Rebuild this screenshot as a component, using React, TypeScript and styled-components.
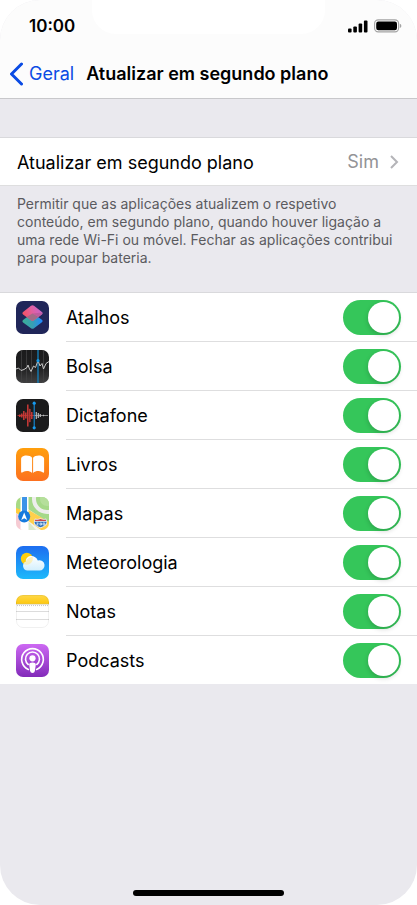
import React, { useState } from "react";
import type { ReactElement } from "react";
import styled, { createGlobalStyle } from "styled-components";

const GlobalStyle = createGlobalStyle`
  *, *::before, *::after { box-sizing: border-box; }
  body {
    margin: 0;
    background: #ffffff;
    color: #000000;
    font-family: Inter, "Liberation Sans", sans-serif;
  }
  button, input { font: inherit; }
`;

const Screen = styled.div`
  display: flex;
  flex-direction: column;
  min-height: 100vh;
  overflow: hidden;
  border-radius: 40px;
  background: #eae9ee;
`;

const Header = styled.header`
  border-bottom: 1px solid #c8c8cb;
  background: #fcfcfc;
`;

const StatusBar = styled.div`
  display: grid;
  grid-template-columns: 92px 1fr 92px;
  height: 50px;
`;

const Clock = styled.time`
  align-self: center;
  padding: 2px 0 0 29px;
  font-size: 17px;
  line-height: 20px;
  font-weight: 600;
  white-space: nowrap;
`;

const Notch = styled.div`
  height: 34px;
  border-radius: 0 0 24px 24px;
  background: #ffffff;
`;

const StatusIcons = styled.div`
  display: flex;
  align-items: center;
  justify-content: flex-end;
  gap: 6px;
  padding: 2px 15px 0 0;
`;

const NavBar = styled.nav`
  display: flex;
  align-items: center;
  gap: 12px;
  height: 48px;
  padding: 0 9px;
`;

const BackLink = styled.a`
  display: flex;
  align-items: center;
  gap: 6px;
  color: #0a4be4;
  font-size: 18px;
  line-height: 24px;
  text-decoration: none;
`;

const Title = styled.h1`
  margin: 0;
  font-size: 18px;
  line-height: 24px;
  font-weight: 600;
  white-space: nowrap;
`;

const Main = styled.main`
  flex: 1;
  padding-top: 38px;
`;

const Group = styled.section`
  border-top: 1px solid #d9d9dc;
  border-bottom: 1px solid #dededf;
  background: #ffffff;
`;

const SettingButton = styled.button`
  display: flex;
  align-items: center;
  width: 100%;
  height: 47px;
  padding: 0 18px 0 17px;
  border: 0;
  background: none;
  color: #000000;
  font-size: 18px;
  line-height: 24px;
  text-align: left;
  cursor: pointer;
`;

const SettingName = styled.span`
  flex: 1;
  padding-top: 2px;
`;

const SettingValue = styled.span`
  margin-right: 11px;
  color: #939396;
`;

const Footnote = styled.p`
  margin: 0;
  padding: 9px 17px 25px;
  color: #5b5b5f;
  font-size: 14px;
  line-height: 18px;
`;

const AppList = styled.ul`
  margin: 0;
  padding: 0;
  border-top: 1px solid #d9d9dc;
  background: #ffffff;
  list-style: none;
`;

const AppItem = styled.li`
  display: flex;
  gap: 17px;
  padding-left: 16px;

  &:not(:last-child) > label { border-bottom: 1px solid #dededf; }
`;

const AppIcon = styled.svg`
  flex: none;
  width: 33px;
  height: 33px;
  margin: 8px 0 7px;
`;

const AppLabel = styled.label`
  display: flex;
  flex: 1;
  align-items: flex-start;
  justify-content: space-between;
  padding: 7px 16px 6px 0;
  font-size: 18px;
  line-height: 24px;
  cursor: pointer;
`;

const AppName = styled.span`
  padding-top: 6px;
`;

const Toggle = styled.input`
  display: flex;
  align-items: center;
  width: 58px;
  height: 35px;
  margin: 0;
  padding: 2px;
  appearance: none;
  border-radius: 18px;
  background: #dcdce0;
  cursor: pointer;

  &::before {
    content: "";
    width: 31px;
    height: 31px;
    border-radius: 50%;
    background: #ffffff;
    box-shadow: 0 2px 5px rgba(0, 0, 0, 0.18);
  }

  &:checked {
    justify-content: flex-end;
    background: #35c65a;
  }
`;

const HomeArea = styled.footer`
  display: flex;
  justify-content: center;
  padding-bottom: 9px;
`;

const HomeIndicator = styled.div`
  width: 36%;
  height: 6px;
  border-radius: 3px;
  background: #000000;
`;

const Tile = ({ id, fill, children }: { id: string; fill: string; children?: React.ReactNode }) => (
  <>
    <defs>
      <clipPath id={`${id}-clip`}>
        <rect width="33" height="33" rx="7" />
      </clipPath>
    </defs>
    <g clipPath={`url(#${id}-clip)`}>
      <rect width="33" height="33" fill={fill} />
      {children}
    </g>
  </>
);

const Shortcuts = () => (
  <AppIcon viewBox="0 0 33 33" aria-hidden="true">
    <defs>
      <linearGradient id="sc-top" x1="0" y1="0.6" x2="1" y2="0.3">
        <stop offset="0" stopColor="#f4515f" />
        <stop offset="0.5" stopColor="#e2609f" />
        <stop offset="1" stopColor="#c565cf" />
      </linearGradient>
      <linearGradient id="sc-low" x1="0" y1="0" x2="1" y2="0">
        <stop offset="0" stopColor="#3cae98" />
        <stop offset="0.5" stopColor="#379fb4" />
        <stop offset="1" stopColor="#2188ff" />
      </linearGradient>
    </defs>
    <Tile id="sc" fill="#202659">
      <path d="M15 13.2Q16.5 12.3 18 13.2L25.6 18.5Q27.6 20 25.6 21.5L18 27.3Q16.5 28.3 15 27.3L7.4 21.7Q5.4 20.2 7.4 18.7Z" fill="url(#sc-low)" />
      <path d="M15 4.8Q16.5 3.8 18 4.8L25.6 10.7Q27.6 12.2 25.6 13.7L18 19.2Q16.5 20.2 15 19.2L7.4 13.7Q5.4 12.2 7.4 10.7Z" fill="url(#sc-top)" />
      <path d="M16.5 12.6L22.6 16L18 19.2Q16.5 20.2 15 19.2L10.5 16Z" fill="#a26b87" />
      <path d="M22.6 16L26.2 13L26.4 11.6L16.5 12.6Z" fill="#b75a97" opacity="0.75" />
    </Tile>
  </AppIcon>
);

const Stocks = () => (
  <AppIcon viewBox="0 0 33 33" aria-hidden="true">
    <defs>
      <linearGradient id="st-bg" x2="0" y2="1">
        <stop offset="0" stopColor="#1b1b1c" />
        <stop offset="0.55" stopColor="#202021" />
        <stop offset="1" stopColor="#404041" />
      </linearGradient>
    </defs>
    <Tile id="st" fill="url(#st-bg)">
      <path d="M5.5 0V33M10.5 0V33M15.5 0V33M27.5 0V33" stroke="#414143" strokeWidth="0.8" />
      <path d="M22 0V33" stroke="#147bb5" strokeWidth="1.4" />
      <path d="M0 19L2.5 18L5 20.5L8 19.5L11 17.5L12 15L13.5 19L15 21.5L17.5 16L19.5 17.5L22 10.5L24 16L26 13.5L27.5 19L30 13.5L33 11.5" fill="none" stroke="#c6c6c6" strokeWidth="1" />
      <circle cx="22" cy="10.7" r="1.6" fill="#1497e5" />
    </Tile>
  </AppIcon>
);

const Recorder = () => (
  <AppIcon viewBox="0 0 33 33" aria-hidden="true">
    <Tile id="rc" fill="#1b1b1c">
      <path d="M1.5 16.5H18" stroke="#a62f2d" strokeWidth="1" />
      <path d="M3.8 15.5V18M5.8 14.5V18.5M7.8 12V21M9.8 13.5V19.5M11.8 5.5V27.5M13.8 10V23M15.8 13V20" stroke="#cb3a37" strokeWidth="1.5" />
      <path d="M12.8 9V24" stroke="#8b2a2b" strokeWidth="1" />
      <path d="M18 16.5H32" stroke="#a9a9aa" strokeWidth="0.8" />
      <path d="M20.3 13V20M22.3 14V19M24.3 15V18M27.5 15.8V17.2" stroke="#bcbcbd" strokeWidth="1.2" />
      <path d="M18.2 4V29" stroke="#168edb" strokeWidth="1.1" />
      <circle cx="18.2" cy="4.2" r="1.6" fill="#169aef" />
      <circle cx="18.2" cy="28.8" r="1.6" fill="#169aef" />
    </Tile>
  </AppIcon>
);

const Books = () => (
  <AppIcon viewBox="0 0 33 33" aria-hidden="true">
    <defs>
      <linearGradient id="bk-bg" x2="0" y2="1">
        <stop offset="0" stopColor="#ff9f0c" />
        <stop offset="1" stopColor="#fc7020" />
      </linearGradient>
    </defs>
    <Tile id="bk" fill="url(#bk-bg)">
      <path d="M16.1 9.8C14.5 7 7.7 6.5 5.7 9.2Q5.1 10 5.1 11V23.5C5.1 25.1 6 24.8 7 24.1C9.6 22.5 13.3 22.4 16.1 25Z" fill="#ffffff" />
      <path d="M17.1 9.8C18.7 7 25.5 6.5 27.5 9.2Q28.1 10 28.1 11V23.5C28.1 25.1 27.2 24.8 26.2 24.1C23.6 22.5 19.9 22.4 17.1 25Z" fill="#ffffff" />
    </Tile>
  </AppIcon>
);

const Maps = () => (
  <AppIcon viewBox="0 0 33 33" aria-hidden="true">
    <Tile id="mp" fill="#f5f3ec">
      <path d="M0 0H6V14L0 13Z" fill="#a8da84" />
      <path d="M12 0H33V26L12 12Z" fill="#a6d989" />
      <circle cx="31" cy="2" r="13" fill="none" stroke="#eeeeec" strokeWidth="4" />
      <circle cx="31" cy="2" r="7" fill="#b5df9b" />
      <path d="M0 16L11 27V33H0Z" fill="#f6cbd3" />
      <path d="M0 11L6 13V19L0 16Z" fill="#ffcd3c" />
      <path d="M11 12L33 25V33H25L11 23Z" fill="#ffd04b" />
      <path d="M11 23L20 33H11Z" fill="#d9e9cc" />
      <path d="M4.5 0H12.5V33H4.5Z" fill="#ffffff" />
      <path d="M6 0H11V18H6Z" fill="#3c93e8" />
      <circle cx="8.2" cy="19.5" r="6" fill="#177bdd" />
      <path d="M8.2 15.5L11.2 23L8.2 21.3L5.2 23Z" fill="#ffffff" />
      <path d="M19 21.5Q21.5 22.5 24.5 21.2Q28 22.5 30 21.5Q32 24.5 31 27Q29.5 29.5 24.5 31.3Q19.5 29.5 18 27Q17 24.5 19 21.5Z" fill="#e9eef4" />
      <path d="M19.5 22.5Q22 23.2 24.5 22Q27 23.2 29.5 22.5L30.3 24H18.7Z" fill="#c8474b" />
      <path d="M18.6 24.7H30.5Q31 28 24.5 30.3Q18 28 18.6 24.7Z" fill="#2c70ba" />
      <path d="M20.5 26H22.3L20.7 28H22.4M24 26.1H25.5V28H24ZM27 26H28.8V28H27Z" fill="none" stroke="#ffffff" strokeWidth="0.7" />
    </Tile>
  </AppIcon>
);

const Weather = () => (
  <AppIcon viewBox="0 0 33 33" aria-hidden="true">
    <defs>
      <linearGradient id="wt-bg" x2="0" y2="1">
        <stop offset="0" stopColor="#1d6df0" />
        <stop offset="1" stopColor="#1eb9fb" />
      </linearGradient>
      <linearGradient id="wt-cloud" x2="0" y2="1">
        <stop offset="0" stopColor="#ffffff" />
        <stop offset="1" stopColor="#d3effd" />
      </linearGradient>
      <clipPath id="wt-cloud-clip">
        <path d="M11.5 24.5A4.6 4.6 0 0 1 9.8 15.7A7.2 7.2 0 0 1 22.8 14.5A5 5 0 1 1 23 24.5Z" />
      </clipPath>
    </defs>
    <Tile id="wt" fill="url(#wt-bg)">
      <circle cx="10.8" cy="12.8" r="6" fill="#ffd00c" />
      <path d="M11.5 24.5A4.6 4.6 0 0 1 9.8 15.7C9.4 8.5 19.8 8.3 21.8 14.6A5.1 5.1 0 1 1 23 24.5Z" fill="url(#wt-cloud)" />
      <circle cx="10.8" cy="12.8" r="6" fill="#fee99c" opacity="0.65" clipPath="url(#wt-cloud-clip)" />
    </Tile>
  </AppIcon>
);

const Notes = () => (
  <AppIcon viewBox="0 0 33 33" aria-hidden="true">
    <defs>
      <linearGradient id="nt-top" x2="0" y2="1">
        <stop offset="0" stopColor="#ffd849" />
        <stop offset="1" stopColor="#fdc80e" />
      </linearGradient>
    </defs>
    <Tile id="nt" fill="#ffffff">
      <rect width="33" height="9" fill="url(#nt-top)" />
      <path d="M0 9.2H33" stroke="#c7b98b" strokeWidth="0.6" />
      <path d="M1 10.6H33" stroke="#c4c4c4" strokeWidth="1" strokeDasharray="1 1" />
      <path d="M0 16.5H33M0 24.5H33" stroke="#dcdcdc" strokeWidth="1" />
    </Tile>
    <rect x="0.5" y="0.5" width="32" height="32" rx="6.5" fill="none" stroke="#000000" strokeOpacity="0.06" />
  </AppIcon>
);

const Podcasts = () => (
  <AppIcon viewBox="0 0 33 33" aria-hidden="true">
    <defs>
      <linearGradient id="pc-bg" x2="0" y2="1">
        <stop offset="0" stopColor="#cd69f3" />
        <stop offset="1" stopColor="#822ab9" />
      </linearGradient>
    </defs>
    <Tile id="pc" fill="url(#pc-bg)">
      <path d="M12.4 25.4A10.8 10.8 0 1 1 20.6 25.4" fill="none" stroke="#ffffff" strokeWidth="1.6" strokeLinecap="round" />
      <path d="M12.2 20.5A7 7 0 1 1 20.8 20.5" fill="none" stroke="#ffffff" strokeWidth="1.6" strokeLinecap="round" />
      <circle cx="16.5" cy="14.3" r="3.1" fill="#ffffff" />
      <path d="M13.2 20.7Q13.2 18.6 16.5 18.6Q19.8 18.6 19.8 20.7L18.9 27Q18.5 29 16.5 29Q14.5 29 14.1 27Z" fill="#ffffff" />
    </Tile>
  </AppIcon>
);

const apps: { name: string; Icon: () => ReactElement }[] = [
  { name: "Atalhos", Icon: Shortcuts },
  { name: "Bolsa", Icon: Stocks },
  { name: "Dictafone", Icon: Recorder },
  { name: "Livros", Icon: Books },
  { name: "Mapas", Icon: Maps },
  { name: "Meteorologia", Icon: Weather },
  { name: "Notas", Icon: Notes },
  { name: "Podcasts", Icon: Podcasts },
];

export default function App() {
  const [disabled, setDisabled] = useState<string[]>([]);
  const flip = (name: string) =>
    setDisabled((list) => (list.includes(name) ? list.filter((n) => n !== name) : [...list, name]));

  return (
    <>
      <GlobalStyle />
      <Screen>
        <Header>
          <StatusBar>
            <Clock>10:00</Clock>
            <Notch />
            <StatusIcons>
              <svg width="20" height="13" viewBox="0 0 20 13" aria-hidden="true">
                <rect x="0" y="8.5" width="3.6" height="4" rx="1" />
                <rect x="5.3" y="6.5" width="3.6" height="6" rx="1" />
                <rect x="10.6" y="3.5" width="3.6" height="9" rx="1" />
                <rect x="15.9" y="0.5" width="3.6" height="12" rx="1" />
              </svg>
              <svg width="28" height="14" viewBox="0 0 28 14" aria-hidden="true">
                <rect x="0.6" y="0.9" width="24" height="12" rx="3.6" fill="none" stroke="#a3a3a3" strokeWidth="1.1" />
                <rect x="2.2" y="2.5" width="20.8" height="8.8" rx="2.2" />
                <path d="M25.8 4.8Q27.4 5.4 27.4 6.9Q27.4 8.4 25.8 9Z" fill="#a3a3a3" />
              </svg>
            </StatusIcons>
          </StatusBar>
          <NavBar>
            <BackLink href="#geral">
              <svg width="14" height="24" viewBox="0 0 14 24" fill="none" aria-hidden="true">
                <path d="M12.5 2L2.5 12L12.5 22" stroke="#0a4be4" strokeWidth="3" strokeLinecap="round" strokeLinejoin="round" />
              </svg>
              Geral
            </BackLink>
            <Title>Atualizar em segundo plano</Title>
          </NavBar>
        </Header>
        <Main>
          <Group>
            <SettingButton type="button">
              <SettingName>Atualizar em segundo plano</SettingName>
              <SettingValue>Sim</SettingValue>
              <svg width="9" height="14" viewBox="0 0 9 14" fill="none" aria-hidden="true">
                <path d="M1 1L7 7L1 13" stroke="#b4b4b8" strokeWidth="2" />
              </svg>
            </SettingButton>
          </Group>
          <Footnote>
            Permitir que as aplicações atualizem o respetivo conteúdo, em segundo plano, quando houver ligação a
            uma rede Wi-Fi ou móvel. Fechar as aplicações contribui para poupar bateria.
          </Footnote>
          <AppList>
            {apps.map(({ name, Icon }) => (
              <AppItem key={name}>
                <Icon />
                <AppLabel>
                  <AppName>{name}</AppName>
                  <Toggle
                    type="checkbox"
                    role="switch"
                    checked={!disabled.includes(name)}
                    onChange={() => flip(name)}
                  />
                </AppLabel>
              </AppItem>
            ))}
          </AppList>
        </Main>
        <HomeArea>
          <HomeIndicator />
        </HomeArea>
      </Screen>
    </>
  );
}
